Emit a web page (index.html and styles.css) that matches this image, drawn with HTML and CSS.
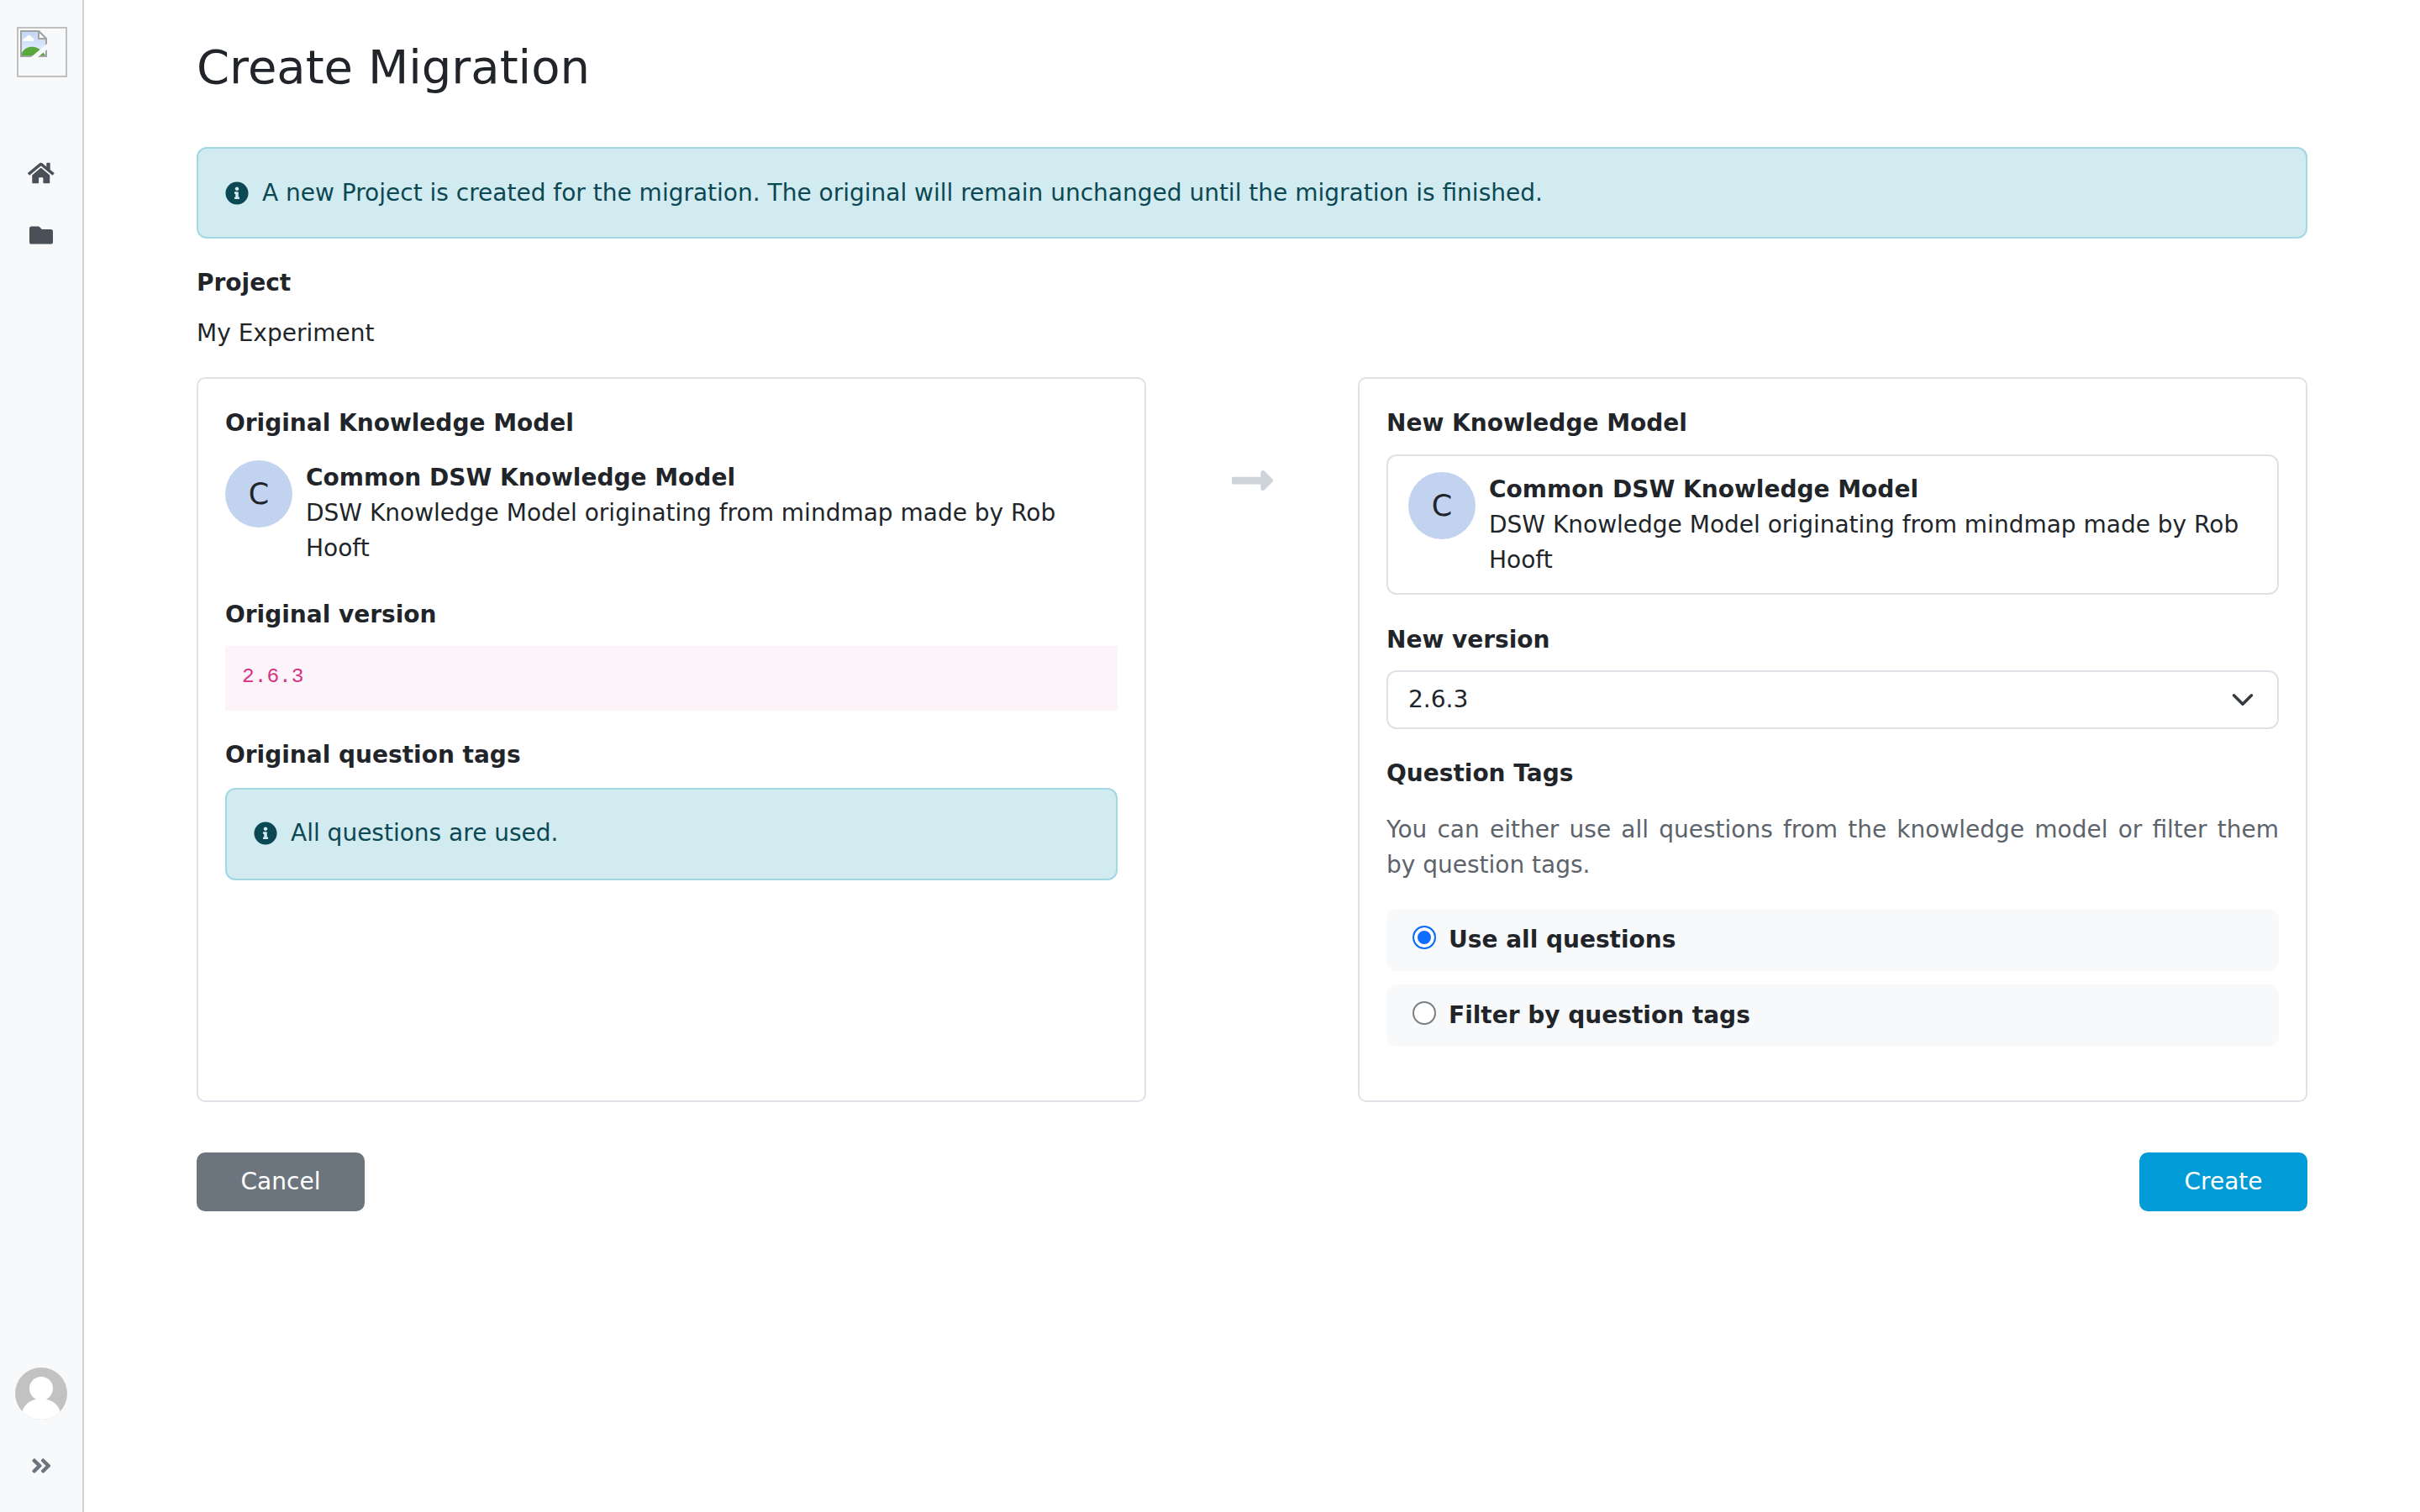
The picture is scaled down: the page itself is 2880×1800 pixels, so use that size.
FILE: index.html
```html
<!DOCTYPE html>
<html lang="en">
<head>
<meta charset="utf-8">
<title>Create Migration</title>
<link rel="stylesheet" href="styles.css">
</head>
<body>
<div class="app">
  <aside class="sidebar">
    <div class="logo">
      <svg class="broken" viewBox="0 0 32 32" width="32" height="32">
        <defs><linearGradient id="sky" x1="0" y1="0" x2="0" y2="1"><stop offset="0" stop-color="#c2d6f6"/><stop offset="1" stop-color="#eaf1fc"/></linearGradient></defs>
        <path d="M1 1H22L31 10V31H1Z" fill="url(#sky)" stroke="#a3a3a3" stroke-width="2"/>
        <path d="M22 1V10H31Z" fill="#fff" stroke="#a3a3a3" stroke-width="2" stroke-linejoin="round"/>
        <path d="M3 13C3 10 5 9 7 9C8 5 13 5 14 9C16 9 17 11 16 13Z" fill="#fff"/>
        <path d="M2 30V27C5 21 11 19 17 20C22 21 27 25 30 30Z" fill="#5aa83c"/>
        <path d="M13 32L32 16V23L21 32Z" fill="#f8f9fa"/>
      </svg>
    </div>
    <nav class="menu">
      <a class="menu-item"><svg class="ico-home" viewBox="0 0 576 512"><path fill="currentColor" d="M280.370 148.260L96 300.110V464a16 16 0 0 0 16 16l112.060-.29a16 16 0 0 0 15.920-16V368a16 16 0 0 1 16-16h64a16 16 0 0 1 16 16v95.640a16 16 0 0 0 16 16.050L464 480a16 16 0 0 0 16-16V300L295.670 148.260a12.190 12.190 0 0 0-15.300 0zM571.600 251.470L488 182.560V44.050a12 12 0 0 0-12-12h-56a12 12 0 0 0-12 12v72.610L318.470 43a48 48 0 0 0-61 0L4.340 251.470a12 12 0 0 0-1.600 16.900l25.500 31A12 12 0 0 0 45.150 301l235.220-193.740a12.190 12.190 0 0 1 15.300 0L530.900 301a12 12 0 0 0 16.900-1.600l25.500-31a12 12 0 0 0-1.700-16.930z"/></svg></a>
      <a class="menu-item"><svg class="ico-folder" viewBox="0 0 512 512"><path fill="currentColor" d="M464 128H272l-54.630-54.630A32 32 0 0 0 194.750 64H48a48 48 0 0 0-48 48v288a48 48 0 0 0 48 48h416a48 48 0 0 0 48-48V176a48 48 0 0 0-48-48z"/></svg></a>
    </nav>
    <div class="side-bottom">
      <svg class="avatar" viewBox="0 0 62 62"><defs><clipPath id="av"><circle cx="31" cy="31" r="31"/></clipPath></defs><circle cx="31" cy="31" r="31" fill="#c2c2c2"/><g clip-path="url(#av)" fill="#fff"><circle cx="31" cy="25" r="14"/><ellipse cx="31" cy="56" rx="23" ry="19"/></g></svg>
      <a class="collapse"><svg class="ico-chev" viewBox="0 0 448 512"><path fill="currentColor" d="M224.300 273l-136 136c-9.400 9.400-24.600 9.400-33.900 0l-22.600-22.600c-9.400-9.400-9.400-24.600 0-33.900l96.400-96.400-96.400-96.400c-9.400-9.400-9.400-24.600 0-33.900L54.300 103c9.400-9.400 24.600-9.400 33.900 0l136 136c9.500 9.400 9.500 24.600.1 34zm192-34l-136-136c-9.400-9.400-24.600-9.400-33.900 0l-22.600 22.600c-9.400 9.400-9.400 24.600 0 33.900l96.400 96.400-96.400 96.400c-9.400 9.400-9.400 24.600 0 33.900l22.600 22.600c9.400 9.400 24.600 9.400 33.900 0l136-136c9.400-9.200 9.400-24.400 0-33.800z"/></svg></a>
    </div>
  </aside>
  <main class="main">
    <h1 class="title">Create Migration</h1>
    <div class="alert alert-top">
      <svg class="ico-info" viewBox="0 0 512 512"><path fill="currentColor" d="M256 8C119 8 8 119 8 256s111 248 248 248 248-111 248-248S393 8 256 8zm0 110c23.200 0 42 18.800 42 42s-18.800 42-42 42-42-18.800-42-42 18.800-42 42-42zm56 254c0 6.600-5.400 12-12 12h-88c-6.600 0-12-5.400-12-12v-24c0-6.600 5.400-12 12-12h12v-64h-12c-6.600 0-12-5.400-12-12v-24c0-6.600 5.400-12 12-12h64c6.600 0 12 5.400 12 12v100h12c6.600 0 12 5.400 12 12v24z"/></svg>
      <span>A new Project is created for the migration. The original will remain unchanged until the migration is finished.</span>
    </div>
    <div class="project">
      <div class="label">Project</div>
      <div class="project-name">My Experiment</div>
    </div>
    <div class="compare">
      <section class="card">
        <div class="label card-label">Original Knowledge Model</div>
        <div class="km km-plain">
          <div class="km-icon">C</div>
          <div class="km-body">
            <strong class="km-name">Common DSW Knowledge Model</strong>
            <div>DSW Knowledge Model originating from mindmap made by Rob Hooft</div>
          </div>
        </div>
        <div class="label version-label">Original version</div>
        <code class="code">2.6.3</code>
        <div class="label tags-label">Original question tags</div>
        <div class="alert alert-inner">
          <svg class="ico-info" viewBox="0 0 512 512"><path fill="currentColor" d="M256 8C119 8 8 119 8 256s111 248 248 248 248-111 248-248S393 8 256 8zm0 110c23.200 0 42 18.800 42 42s-18.800 42-42 42-42-18.800-42-42 18.800-42 42-42zm56 254c0 6.600-5.400 12-12 12h-88c-6.600 0-12-5.400-12-12v-24c0-6.600 5.400-12 12-12h12v-64h-12c-6.600 0-12-5.400-12-12v-24c0-6.600 5.400-12 12-12h64c6.600 0 12 5.400 12 12v100h12c6.600 0 12 5.400 12 12v24z"/></svg>
          <span>All questions are used.</span>
        </div>
      </section>
      <div class="arrow-col">
        <svg class="ico-arrow" viewBox="0 0 448 512"><path fill="currentColor" d="M313.941 216H12c-6.627 0-12 5.373-12 12v56c0 6.627 5.373 12 12 12h301.941v46.059c0 21.382 25.851 32.090 40.971 16.971l86.059-86.059c9.373-9.373 9.373-24.569 0-33.941l-86.059-86.059c-15.119-15.119-40.971-4.411-40.971 16.971V216z"/></svg>
      </div>
      <section class="card">
        <div class="label card-label">New Knowledge Model</div>
        <div class="km km-boxed">
          <div class="km-icon">C</div>
          <div class="km-body">
            <strong class="km-name">Common DSW Knowledge Model</strong>
            <div>DSW Knowledge Model originating from mindmap made by Rob Hooft</div>
          </div>
        </div>
        <div class="label new-version-label">New version</div>
        <div class="select">
          <span>2.6.3</span>
          <svg class="caret" viewBox="0 0 16 16"><path d="M2 5l6 6 6-6" fill="none" stroke="#343a40" stroke-width="2" stroke-linecap="round" stroke-linejoin="round"/></svg>
        </div>
        <div class="label qt-label">Question Tags</div>
        <p class="hint">You can either use all questions from the knowledge model or filter them by question tags.</p>
        <div class="radio radio-first"><span class="dot dot-on"></span><span>Use all questions</span></div>
        <div class="radio"><span class="dot"></span><span>Filter by question tags</span></div>
      </section>
    </div>
    <div class="actions">
      <a class="btn btn-cancel">Cancel</a>
      <a class="btn btn-create">Create</a>
    </div>
  </main>
</div>
</body>
</html>
```

FILE: styles.css
```css
* { box-sizing: border-box; }
html, body { margin: 0; height: 100%; }
body { font-family: "DejaVu Sans", sans-serif; font-size: 28px; line-height: 42px; color: #212529; background: #fff; }
.app { display: flex; height: 1800px; }
.sidebar { width: 100px; flex: none; background: #f8f9fa; border-right: 2px solid #ced4da; display: flex; flex-direction: column; align-items: center; }
.logo { margin-top: 32px; margin-left: 20px; width: 60px; height: 60px; border: 2px solid #c0c0c0; padding: 2px 0 0 2px; line-height: 0; align-self: flex-start; }
.menu { margin-top: 100px; display: flex; flex-direction: column; align-items: center; color: #495057; }
.menu-item { height: 74px; display: flex; justify-content: center; align-items: flex-start; line-height: 0; }
.ico-home { width: 31.500px; height: 28px; }
.ico-folder { width: 28px; height: 28px; }
.side-bottom { margin-top: auto; display: flex; flex-direction: column; align-items: center; padding-bottom: 41px; }
.avatar { width: 62px; height: 62px; }
.collapse { margin-top: 41px; line-height: 0; color: #6c757d; }
.ico-chev { width: 24.500px; height: 28px; display: block; }
.main { flex: none; width: 2512px; margin-left: 134px; }
.title { margin: 42px 0 0; font-size: 56px; line-height: 76px; font-weight: 400; }
.alert { background: #d1ebf0; border: 2px solid #a3d8e2; color: #0c4854; border-radius: 12px; display: flex; align-items: center; }
.alert-top { margin-top: 57px; height: 109px; padding: 0 32px; }
.alert-inner { height: 110px; padding: 0 32px 2px; margin-top: 18px; }
.ico-info { width: 28px; height: 28px; margin-right: 16px; flex: none; }
.project { margin-top: 32px; }
.label { font-weight: 700; }
.project-name { margin-top: 18px; }
.compare { margin-top: 31px; display: grid; grid-template-columns: 1130px 252px 1130px; height: 863px; }
.card { border: 2px solid #dee2e6; border-radius: 10px; padding: 32px; }
.card-label { margin-bottom: 14px; }
.km { display: flex; gap: 16px; }
.km-plain { margin-top: 23px; }
.km-boxed { border: 2px solid #dee2e6; border-radius: 12px; padding: 19px 24px 18px; margin-top: 16px; }
.km-icon { width: 80px; height: 80px; flex: none; border-radius: 50%; background: #c2d3ef; display: flex; align-items: center; justify-content: center; font-size: 35px; }
.km-name { display: block; }
.version-label { margin-top: 37px; }
.code { display: block; margin-top: 16px; height: 77px; padding: 19px 20px 0; background: #fdf4f9; color: #d63384; font-family: "Liberation Mono", monospace; font-size: 24.500px; line-height: 36px; }
.tags-label { margin-top: 32px; }
.arrow-col { display: flex; justify-content: center; align-items: flex-start; padding-top: 95px; color: #ced4da; }
.ico-arrow { width: 49px; height: 56px; }
.new-version-label { margin-top: 33px; }
.select { margin-top: 15px; height: 70px; border: 2px solid #dee2e6; border-radius: 12px; padding: 0 27px 0 24px; display: flex; align-items: center; justify-content: space-between; }
.caret { width: 28px; height: 28px; }
.qt-label { margin-top: 32px; }
.hint { margin: 25px 0 0; color: #5c636a; text-align: justify; }
.radio { background: #f8f9fa; border-radius: 12px; height: 74px; padding: 0 31px; margin-top: 16px; display: flex; align-items: center; font-weight: 700; gap: 15px; }
.radio-first { margin-top: 31px; }
.dot { width: 28px; height: 28px; border-radius: 50%; border: 2px solid #7a7f85; background: #fff; flex: none; margin-top: -6px; }
.dot-on { border: 2px solid #0d6efd; background: #0d6efd; box-shadow: inset 0 0 0 4px #fff; }
.actions { margin-top: 60px; display: flex; justify-content: space-between; }
.btn { width: 200px; height: 70px; border-radius: 10px; color: #fff; display: flex; align-items: center; justify-content: center; }
.btn-cancel { background: #6c757d; }
.btn-create { background: #019cd7; }
```
